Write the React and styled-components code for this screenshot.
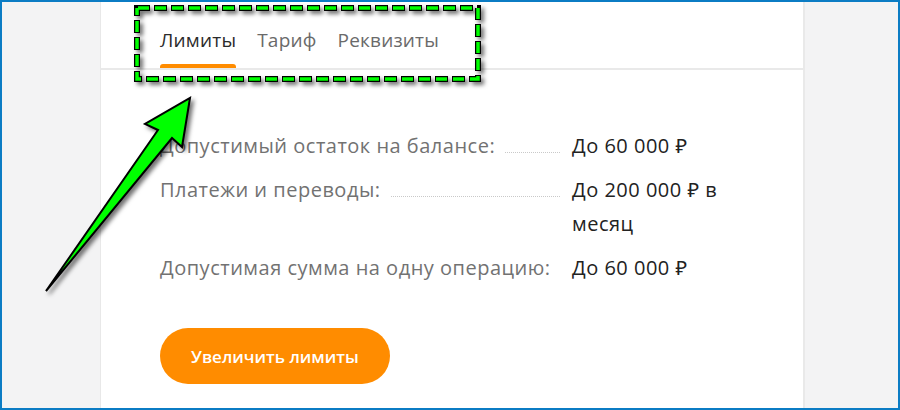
import React from "react";
import styled, { createGlobalStyle } from "styled-components";

const GlobalStyle = createGlobalStyle`
  body {
    margin: 0;
    background: #f3f3f3;
    font-family: "Open Sans", "Noto Sans", sans-serif;
  }
`;

// Outer window with the blue frame
const Frame = styled.div`
  position: relative;
  width: 900px;
  height: 410px;
  box-sizing: border-box;
  border: 2px solid #0b7cc4;
  background: #f3f3f4;
  display: flex;
  overflow: hidden;
`;

const Gutter = styled.div`
  width: 98px;
  flex-shrink: 0;
`;

// White card in the middle
const Card = styled.div`
  width: 702px;
  flex-shrink: 0;
  background: #fff;
  border-left: 1px solid #e8e8e8;
  border-right: 2px solid #e9e9e9;
  display: flex;
  flex-direction: column;
`;

const TabBar = styled.nav`
  height: 66px;
  flex-shrink: 0;
  display: flex;
  gap: 21px;
  padding-left: 59px;
  border-bottom: 2px solid #e9e9e9;
`;

const Tab = styled.div`
  display: flex;
  flex-direction: column;
  justify-content: flex-end;
  font-size: 19px;
  line-height: 24px;
  letter-spacing: 0.2px;
  color: ${(p) => (p.$active ? "#2b2b2b" : "#6a6a6a")};
`;

const TabText = styled.span`
  margin-bottom: 12px;
  white-space: nowrap;
`;

const Underline = styled.span`
  height: 4px;
  border-radius: 3px 3px 0 0;
  background: ${(p) => (p.$active ? "#ff8c00" : "transparent")};
`;

const Content = styled.div`
  padding: 59px 0 0 59px;
`;

const Limits = styled.div`
  display: grid;
  grid-template-columns: 400px 152px;
  column-gap: 12px;
  row-gap: 10px;
  font-size: 20px;
  letter-spacing: 0.5px;
  line-height: 34px;
`;

const Label = styled.div`
  display: flex;
  align-items: baseline;
  color: #727272;
`;

const LabelText = styled.span`
  white-space: nowrap;
`;

const Leader = styled.span`
  flex: 1;
  margin-left: 10px;
  border-bottom: 1px dotted #c9c9c9;
`;

const Value = styled.div`
  color: #222;
`;

const Button = styled.button`
  margin-top: 43px;
  height: 56px;
  padding: 0 31px;
  border: none;
  border-radius: 28px;
  background: #ff8c00;
  color: #fff;
  font-family: "Open Sans", sans-serif;
  font-size: 17px;
  font-weight: 600;
  cursor: pointer;
`;

// Annotation overlay (green dashed frame + arrow)
const Overlay = styled.svg`
  position: absolute;
  left: -2px;
  top: -2px;
  width: 900px;
  height: 410px;
  pointer-events: none;
  filter: drop-shadow(3px 3px 2px rgba(0, 0, 0, 0.55));
`;

const rows = [
  ["Допустимый остаток на балансе:", "До 60 000 ₽"],
  ["Платежи и переводы:", "До 200 000 ₽ в месяц"],
  ["Допустимая сумма на одну операцию:", "До 60 000 ₽"],
];

const tabs = ["Лимиты", "Тариф", "Реквизиты"];

export default function App() {
  return (
    <>
      <GlobalStyle />
      <Frame>
        <Gutter />
        <Card>
          <TabBar>
            {tabs.map((t, i) => (
              <Tab key={t} $active={i === 0}>
                <TabText>{t}</TabText>
                <Underline $active={i === 0} />
              </Tab>
            ))}
          </TabBar>
          <Content>
            <Limits>
              {rows.map(([label, value]) => (
                <React.Fragment key={label}>
                  <Label>
                    <LabelText>{label}</LabelText>
                    <Leader />
                  </Label>
                  <Value>{value}</Value>
                </React.Fragment>
              ))}
            </Limits>
            <Button>Увеличить лимиты</Button>
          </Content>
        </Card>
        <Overlay viewBox="0 0 900 410">
          <rect
            x="137"
            y="8"
            width="341"
            height="71"
            fill="none"
            stroke="#000"
            strokeWidth="6"
            strokeDasharray="13 4"
          />
          <rect
            x="137"
            y="8"
            width="341"
            height="71"
            fill="none"
            stroke="#00ff00"
            strokeWidth="3.5"
            strokeDasharray="11 6"
            strokeDashoffset="-1"
          />
          <polygon
            points="190,98 182,147 172,138 46,291 158,130 145,124"
            fill="#00ff00"
            stroke="#000"
            strokeWidth="2"
            strokeLinejoin="miter"
          />
        </Overlay>
      </Frame>
    </>
  );
}
